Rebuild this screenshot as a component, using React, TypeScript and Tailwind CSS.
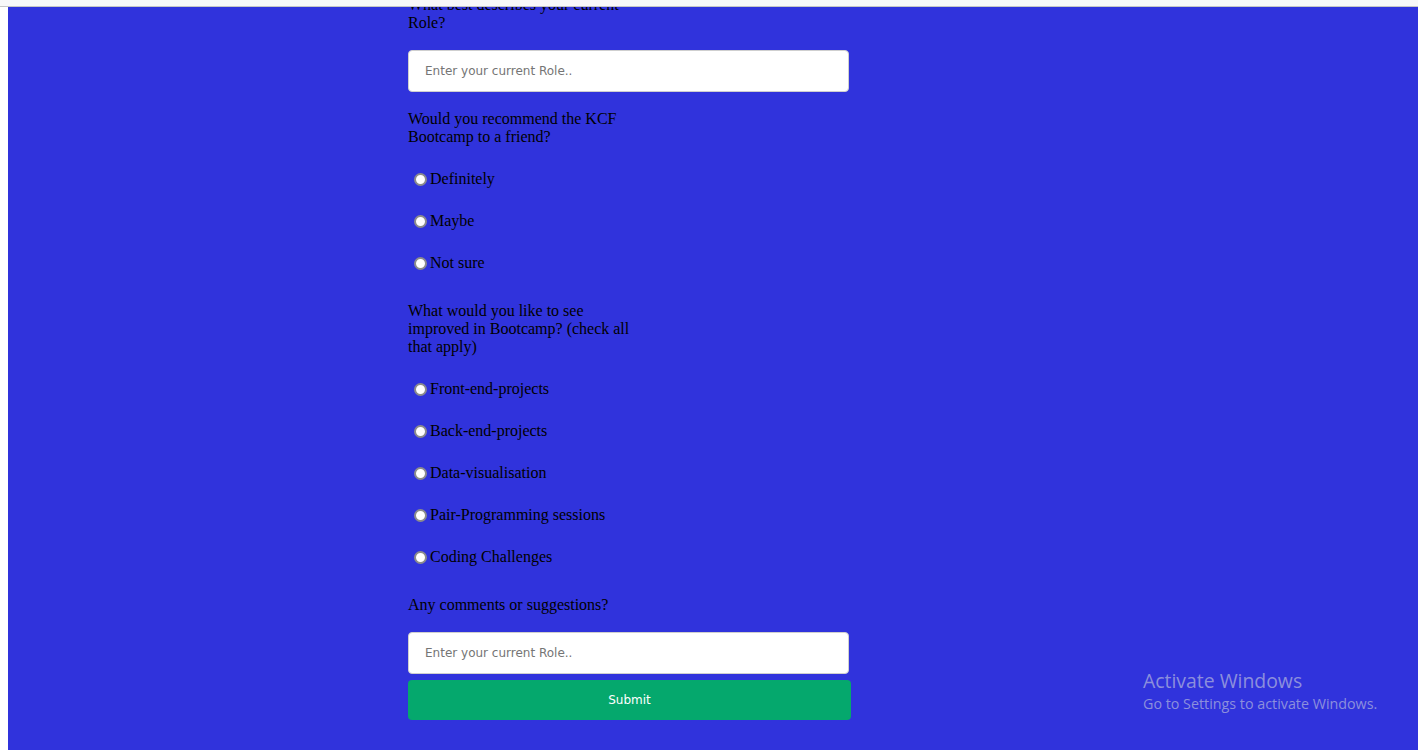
const Radio = ({ name, label }: { name: string; label: string }) => (
  <label className="flex items-center h-[18px]">
    <input
      type="radio"
      name={name}
      className="appearance-none ml-[6px] mr-[3px] w-[13px] h-[13px] rounded-full bg-white border-2 border-[#8c8c8c] shrink-0"
    />
    <span>{label}</span>
  </label>
);

const roles = ["Definitely", "Maybe", "Not sure"];
const improvements = [
  "Front-end-projects",
  "Back-end-projects",
  "Data-visualisation",
  "Pair-Programming sessions",
  "Coding Challenges",
];

const App = () => {
  return (
    <div className="w-[1418px] h-[750px] overflow-hidden bg-white flex flex-col">
      <div className="h-[7px] bg-[#f8f8f9] border-b border-[#c6c6c6] shrink-0"></div>
      <div className="flex-1 ml-[8px] bg-[#3033dc] overflow-hidden relative">
        <form
          className="w-[443px] ml-[400px] mt-[-11px] flex flex-col text-black text-[16px] leading-[18px]"
          style={{ fontFamily: '"Liberation Serif", "Times New Roman", serif' }}
        >
          <p className="w-[230px]">What best describes your current Role?</p>
          <input
            type="text"
            placeholder="Enter your current Role.."
            className="mt-[18px] w-[441px] h-[42px] bg-white border border-[#cfcfcf] rounded-[4px] pl-[16px] text-[12px] placeholder:text-[#757575] font-['DejaVu_Sans',sans-serif]"
          />
          <p className="w-[230px] mt-[18px]">Would you recommend the KCF Bootcamp to a friend?</p>
          <div className="mt-[24px] flex flex-col gap-[24px]">
            {roles.map((r) => (
              <Radio key={r} name="recommend" label={r} />
            ))}
          </div>
          <p className="w-[230px] mt-[30px]">
            What would you like to see improved in Bootcamp? (check all that apply)
          </p>
          <div className="mt-[24px] flex flex-col gap-[24px]">
            {improvements.map((r) => (
              <Radio key={r} name="improve" label={r} />
            ))}
          </div>
          <p className="w-[230px] mt-[30px]">Any comments or suggestions?</p>
          <input
            type="text"
            placeholder="Enter your current Role.."
            className="mt-[18px] w-[441px] h-[42px] bg-white border border-[#cfcfcf] rounded-[4px] pl-[16px] text-[12px] placeholder:text-[#757575] font-['DejaVu_Sans',sans-serif]"
          />
          <button
            type="button"
            className="mt-[6px] w-[443px] h-[40px] bg-[#05a86d] rounded-[4px] text-white text-[12px] font-['DejaVu_Sans',sans-serif]"
          >
            Submit
          </button>
        </form>

        {/* windows watermark */}
        <div className="absolute left-[1135px] top-[662px] text-[#8c8fdc] font-['Open_Sans',sans-serif]">
          <div className="text-[19.4px] leading-[24px]">Activate Windows</div>
          <div className="text-[14.3px] leading-[20px] mt-[1px]">Go to Settings to activate Windows.</div>
        </div>
      </div>
    </div>
  );
};

export default App;
